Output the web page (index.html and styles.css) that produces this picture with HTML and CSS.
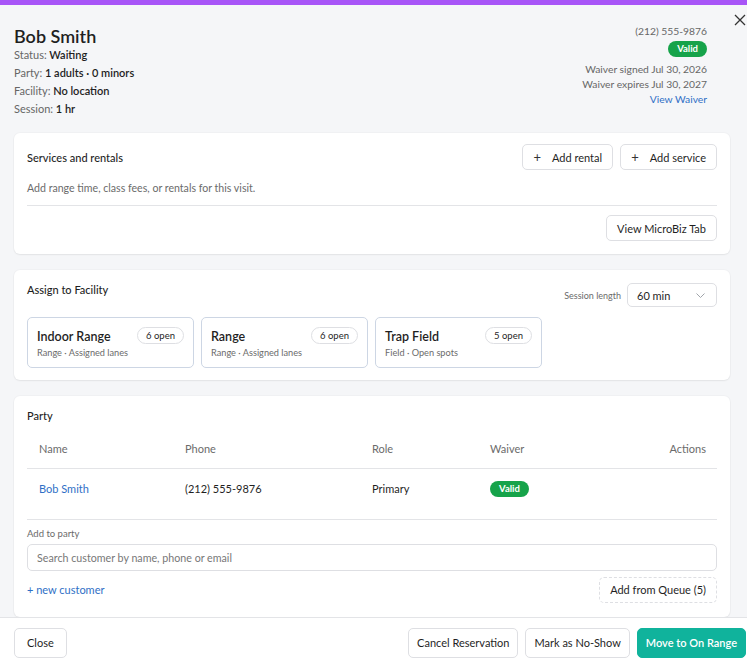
FILE: index.html
```html
<!DOCTYPE html>
<html lang="en">
<head>
  <meta charset="UTF-8" />
  <meta name="viewport" content="width=device-width, initial-scale=1.0"/>
  <title>Reservation</title>
  <link rel="stylesheet" href="styles.css">
</head>
<body>
  <div class="modal">
    <div class="accent"></div>

    <button class="btn-x" aria-label="Close">
      <svg width="12" height="12" viewBox="0 0 12 12"><path d="M1 1L11 11M11 1L1 11" stroke="#333" stroke-width="1.3" fill="none"/></svg>
    </button>

    <div class="scroll">
      <header class="guest">
        <div class="guest-main">
          <h1>Bob Smith</h1>
          <div class="meta"><span class="lbl">Status:</span> Waiting</div>
          <div class="meta"><span class="lbl">Party:</span> 1 adults · 0 minors</div>
          <div class="meta"><span class="lbl">Facility:</span> No location</div>
          <div class="meta"><span class="lbl">Session:</span> 1 hr</div>
        </div>
        <div class="guest-side">
          <div class="phone">(212) 555-9876</div>
          <span class="pill-valid">Valid</span>
          <div class="waiver-line first">Waiver signed Jul 30, 2026</div>
          <div class="waiver-line">Waiver expires Jul 30, 2027</div>
          <a href="#" class="link">View Waiver</a>
        </div>
      </header>

      <!-- Services -->
      <section class="card services">
        <div class="card-head">
          <h2>Services and rentals</h2>
          <div class="actions">
            <button class="btn"><span class="plus">+</span>Add rental</button>
            <button class="btn"><span class="plus">+</span>Add service</button>
          </div>
        </div>
        <p class="hint">Add range time, class fees, or rentals for this visit.</p>
        <div class="card-foot">
          <button class="btn">View MicroBiz Tab</button>
        </div>
      </section>

      <!-- Facility -->
      <section class="card facility-card">
        <div class="card-head facility-head">
          <h2>Assign to Facility</h2>
          <div class="session">
            <span class="session-lbl">Session length</span>
            <div class="select">
              <span>60 min</span>
              <svg width="9" height="5" viewBox="0 0 9 5"><path d="M0.5 0.5l4 4 4-4" stroke="#a0a4aa" stroke-width="1" fill="none"/></svg>
            </div>
          </div>
        </div>
        <div class="facilities">
          <div class="facility">
            <div>
              <div class="fac-name">Indoor Range</div>
              <div class="fac-sub">Range · Assigned lanes</div>
            </div>
            <span class="open">6 open</span>
          </div>
          <div class="facility">
            <div>
              <div class="fac-name">Range</div>
              <div class="fac-sub">Range · Assigned lanes</div>
            </div>
            <span class="open">6 open</span>
          </div>
          <div class="facility">
            <div>
              <div class="fac-name">Trap Field</div>
              <div class="fac-sub">Field · Open spots</div>
            </div>
            <span class="open">5 open</span>
          </div>
        </div>
      </section>

      <!-- Party -->
      <section class="card party">
        <h2>Party</h2>
        <table class="party-table">
          <thead>
            <tr>
              <th class="c-name">Name</th>
              <th class="c-phone">Phone</th>
              <th class="c-role">Role</th>
              <th class="c-waiver">Waiver</th>
              <th class="c-actions">Actions</th>
            </tr>
          </thead>
          <tbody>
            <tr>
              <td class="c-name"><a href="#" class="link">Bob Smith</a></td>
              <td>(212) 555-9876</td>
              <td>Primary</td>
              <td><span class="pill-valid">Valid</span></td>
              <td></td>
            </tr>
          </tbody>
        </table>
        <label class="add-lbl">Add to party</label>
        <input class="search" type="text" placeholder="Search customer by name, phone or email">
        <div class="party-foot">
          <a href="#" class="link">+ new customer</a>
          <button class="btn btn-dashed">Add from Queue (5)</button>
        </div>
      </section>
    </div>

    <footer class="footer">
      <button class="btn btn-close">Close</button>
      <div class="footer-right">
        <button class="btn">Cancel Reservation</button>
        <button class="btn">Mark as No-Show</button>
        <button class="btn btn-primary">Move to On Range</button>
      </div>
    </footer>
  </div>
</body>
</html>
```

FILE: styles.css
```css
* { box-sizing: border-box; }

html, body {
  margin: 0;
  height: 100%;
}

body {
  font-family: 'Lato', 'Noto Sans', sans-serif;
  font-size: 11px;
  color: #1f1f1f;
  background: #f5f6f8;
  overflow: hidden;
}

.modal {
  position: relative;
  height: 100vh;
  display: flex;
  flex-direction: column;
}

.accent {
  height: 5px;
  background: #a855f7;
  flex-shrink: 0;
}

.btn-x {
  position: absolute;
  top: 14px;
  right: 1px;
  width: 12px;
  height: 12px;
  padding: 0;
  border: 0;
  background: none;
  cursor: pointer;
}

.scroll {
  flex: 1;
  overflow: hidden;
  padding: 0 17px 0 14px;
}

/* Guest header */
.guest {
  display: flex;
  justify-content: space-between;
  padding: 21px 23px 15px 0;
}

.guest h1 {
  margin: 0 0 0;
  font-size: 18px;
  font-weight: 600;
  line-height: 20px;
}

.meta {
  line-height: 18px;
  font-weight: 600;
}

.lbl {
  color: #666;
  font-weight: 400;
}

.guest-side {
  display: flex;
  flex-direction: column;
  align-items: flex-end;
  margin-top: -3px;
  font-size: 10.3px;
  color: #666;
}

.phone { line-height: 16px; }

.pill-valid {
  display: inline-block;
  background: #16a34a;
  color: #fff;
  font-size: 9.5px;
  font-weight: 700;
  line-height: 16px;
  padding: 0 9px;
  border-radius: 8px;
}

.guest-side .pill-valid { margin-top: 2px; }

.waiver-line { line-height: 15px; }
.waiver-line.first { margin-top: 5px; }

.link {
  color: #2f6fc6;
  text-decoration: none;
}

.guest-side .link { line-height: 15px; }

/* Cards */
.card {
  background: #fff;
  border-radius: 6px;
  box-shadow: 0 1px 2px rgba(0, 0, 0, 0.06), 0 0 0 1px rgba(0, 0, 0, 0.02);
  padding: 12px 13px 13px;
  margin-bottom: 16px;
}

.card h2 {
  margin: 0;
  font-size: 11px;
  font-weight: 500;
  line-height: 16px;
}

.card-head {
  display: flex;
  align-items: center;
  justify-content: space-between;
}

.services .card-head { margin-top: -1px; }
.services .card-head h2 { position: relative; top: 1px; }

.actions {
  display: flex;
  gap: 7px;
}

.btn {
  font-family: inherit;
  font-size: 11px;
  color: #1f1f1f;
  background: #fff;
  border: 1px solid #dedfe3;
  border-radius: 5px;
  height: 26px;
  padding: 0 10px;
  cursor: pointer;
  white-space: nowrap;
}

.plus {
  font-size: 13px;
  margin-right: 11px;
  color: #333;
}

.hint {
  margin: 10px 0 0;
  padding-bottom: 9px;
  color: #6b6b6b;
  font-size: 10.6px;
  line-height: 16px;
  border-bottom: 1px solid #e3e4e7;
}

.card-foot {
  display: flex;
  justify-content: flex-end;
  padding-top: 9px;
}

/* Facility */
.facility-card { padding-top: 12px; padding-bottom: 12px; }

.facility-head {
  align-items: flex-start;
}

.session {
  display: flex;
  align-items: center;
  gap: 6px;
  margin-top: 1px;
}

.session-lbl {
  font-size: 9px;
  color: #6b6b6b;
}

.select {
  width: 90px;
  height: 24px;
  border: 1px solid #dedfe3;
  border-radius: 5px;
  display: flex;
  align-items: center;
  justify-content: space-between;
  padding: 0 11px 0 9px;
}

.facilities {
  display: flex;
  gap: 7px;
  margin-top: 10px;
}

.facility {
  width: 167px;
  height: 51px;
  border: 1px solid #cdd6e4;
  border-radius: 5px;
  padding: 9px 9px 0 9px;
  display: flex;
  justify-content: space-between;
  align-items: flex-start;
  white-space: nowrap;
}

.fac-name {
  font-size: 12.5px;
  font-weight: 600;
  line-height: 20px;
}

.fac-sub {
  font-size: 9.2px;
  color: #6b6b6b;
  line-height: 12px;
}

.open {
  border: 1px solid #dedfe3;
  border-radius: 9px;
  font-size: 9.5px;
  line-height: 15px;
  padding: 0 8px;
}

/* Party */
.party { padding-top: 12px; padding-bottom: 14px; }

.party-table {
  width: 100%;
  border-collapse: collapse;
  margin-top: 6px;
}

.party-table th {
  font-weight: 400;
  color: #6b6b6b;
  text-align: left;
  height: 38px;
  padding: 0;
  border-bottom: 1px solid #e3e4e7;
}

.party-table td {
  height: 51px;
  padding: 0 0 10px;
  border-bottom: 1px solid #e3e4e7;
}

.party-table .c-name { padding-left: 12px; width: 158px; }
.c-phone { width: 187px; }
.c-role { width: 118px; }
.party-table .c-actions { text-align: right; padding-right: 11px; }

.add-lbl {
  display: block;
  font-size: 9.5px;
  line-height: 12px;
  color: #6b6b6b;
  margin-top: 8px;
}

.search {
  display: block;
  width: 100%;
  height: 27px;
  margin-top: 4px;
  border: 1px solid #dedfe3;
  border-radius: 5px;
  padding: 0 9px;
  font-family: inherit;
  font-size: 10.7px;
}

.search::placeholder { color: #777; }

.party-foot {
  display: flex;
  justify-content: space-between;
  align-items: center;
  margin-top: 6px;
}

.btn-dashed { border-style: dashed; }

/* Footer */
.footer {
  flex-shrink: 0;
  height: 50px;
  background: #fff;
  border-top: 1px solid #e3e4e7;
  display: flex;
  align-items: center;
  justify-content: space-between;
  padding: 0 1px 0 14px;
}

.footer .btn { height: 30px; padding: 0 8px; }
.footer .btn-close { padding: 0 12px; }

.footer-right {
  display: flex;
  gap: 7px;
}

.btn-primary {
  background: #10b39c;
  border-color: #10b39c;
  color: #fff;
  font-weight: 600;
}
```
